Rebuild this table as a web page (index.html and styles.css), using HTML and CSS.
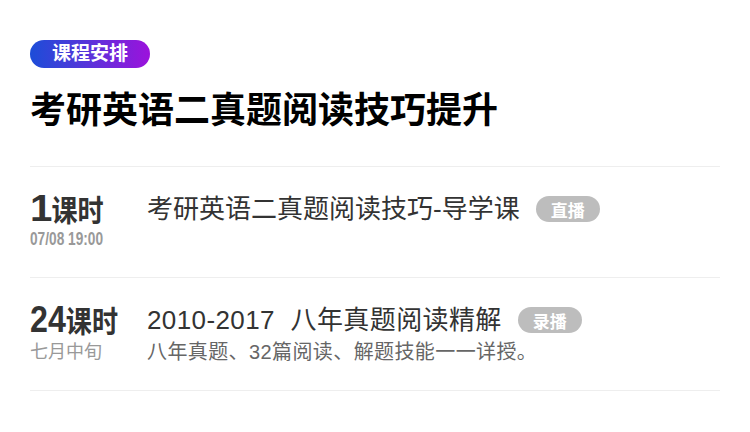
FILE: index.html
```html
<!DOCTYPE html>
<html lang="zh-CN">
<head>
<meta charset="utf-8">
<link rel="stylesheet" href="styles.css">
</head>
<body>
<div class="page">
  <div class="header">
    <span class="badge">课程安排</span>
    <h1 class="title">考研英语二真题阅读技巧提升</h1>
  </div>
  <div class="list">
    <div class="row">
      <div class="left">
        <div class="hours"><span class="num num-one">1</span><span class="unit">课时</span></div>
        <div class="date-line"><span class="date">07/08 19:00</span></div>
      </div>
      <div class="right">
        <div class="lesson"><span class="lesson-name">考研英语二真题阅读技巧-导学课</span><span class="tag">直播</span></div>
      </div>
    </div>
    <div class="row row-2">
      <div class="left">
        <div class="hours"><span class="num">24</span><span class="unit">课时</span></div>
        <div class="when">七月中旬</div>
      </div>
      <div class="right">
        <div class="lesson"><span class="lesson-name wide-space">2010-2017 八年真题阅读精解</span><span class="tag">录播</span></div>
        <div class="desc">八年真题、32篇阅读、解题技能一一详授。</div>
      </div>
    </div>
  </div>
</div>
</body>
</html>
```

FILE: styles.css
```css
html, body {
  margin: 0;
  padding: 0;
  background: #fff;
}
body {
  font-family: "Liberation Sans", "Noto Sans CJK SC", sans-serif;
  color: #333;
}
.page {
  padding: 40px 30px 0 30px;
}
.header {
  display: flex;
  flex-direction: column;
  align-items: flex-start;
}
.badge {
  display: inline-flex;
  align-items: center;
  height: 28px;
  padding: 0 22px;
  border-radius: 14px;
  background: linear-gradient(90deg, #1c4dd8 0%, #5a33da 50%, #9c12dc 100%);
  color: #fff;
  font-size: 19px;
  font-weight: bold;
  line-height: 28px;
}
.title {
  margin: 25px 0 0 0;
  font-size: 36px;
  line-height: 36px;
  font-weight: bold;
  color: #000;
}
.list {
  margin-top: 37px;
  border-top: 1px solid #eeeeee;
}
.row {
  display: flex;
  align-items: flex-start;
  padding: 24px 0 26px 0;
  border-bottom: 1px solid #eeeeee;
}
.row-2 {
  padding: 24px 0 24px 0;
}
.left {
  width: 117px;
  flex: 0 0 117px;
}
.hours {
  display: inline-block;
  height: 36px;
  line-height: 36px;
  font-weight: bold;
  color: #333;
  white-space: nowrap;
  transform: scaleX(0.87);
  transform-origin: left center;
  vertical-align: top;
}
.num {
  font-size: 37px;
  font-weight: bold;
}
.num-one {
  display: inline-block;
  transform: scaleX(1.25);
  transform-origin: left center;
  margin-right: 4px;
}
.unit {
  font-size: 30px;
  font-weight: bold;
}
.date-line {
  height: 24px;
  line-height: 24px;
}
.date {
  display: inline-block;
  font-weight: bold;
  font-size: 19px;
  color: #999;
  white-space: nowrap;
  transform: scaleX(0.72);
  transform-origin: left center;
}
.when {
  font-size: 18px;
  line-height: 28px;
  color: #999;
}
.right {
  flex: 1;
  min-width: 0;
}
.lesson {
  display: flex;
  align-items: center;
  height: 36px;
}
.lesson-name {
  font-size: 26px;
  line-height: 36px;
  color: #333;
  white-space: nowrap;
}
.wide-space {
  letter-spacing: 0.4px;
  word-spacing: 8px;
}
.tag {
  display: inline-flex;
  align-items: center;
  height: 26px;
  padding: 0 15px;
  margin-left: 16px;
  border-radius: 13px;
  background: #bdbdbd;
  color: #fff;
  font-size: 17px;
  font-weight: bold;
}
.desc {
  font-size: 20px;
  line-height: 28px;
  letter-spacing: 0.4px;
  color: #666;
  white-space: nowrap;
}
```
